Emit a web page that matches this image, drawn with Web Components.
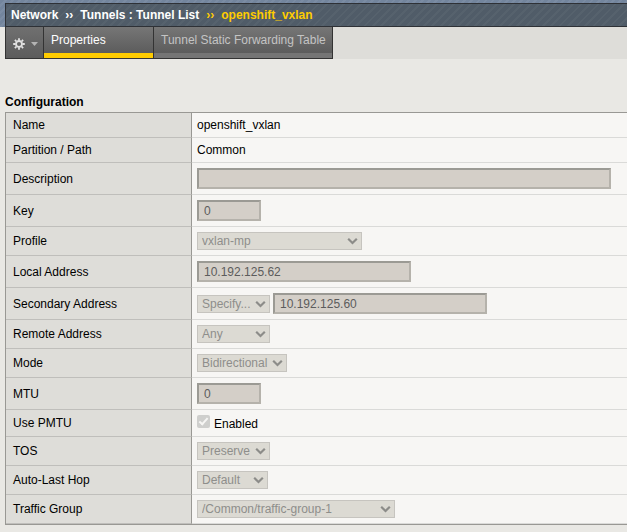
<!DOCTYPE html>
<html lang="en">
<head>
<meta charset="utf-8">
<title>Network : Tunnels : openshift_vxlan</title>
<style>
  body { margin: 0; background: #e9e8e4; color: #000; font: 12px/14px "Liberation Sans", Arial, sans-serif; }
</style>
</head>
<body>
<tunnel-page></tunnel-page>

<template id="page">
  <style>
    :host { display: block; }
    main { display: block; padding: 36px 0 8px 5px; }
    h2 { margin: 0 0 3px; font: bold 12px/14px "Liberation Sans", Arial, sans-serif; }
  </style>
  <crumb-bar>
    <span>Network</span>
    <span>Tunnels : Tunnel List</span>
    <span>openshift_vxlan</span>
  </crumb-bar>
  <tab-bar>
    <tab-item active>Properties</tab-item>
    <tab-item>Tunnel Static Forwarding Table</tab-item>
  </tab-bar>
  <main>
    <h2>Configuration</h2>
    <config-table></config-table>
  </main>
</template>

<template id="crumbs">
  <style>
    :host {
      display: block; padding: 3px 0 0 5px;
      background: repeating-linear-gradient(135deg, #73859d 0 3px, #7b8ca3 3px 5px);
    }
    nav {
      display: flex; gap: 7px; height: 22px; padding-left: 5px; line-height: 22px;
      font-weight: bold; color: #fff;
      border: solid #2e3136; border-width: 1px 0 1px 1px;
      background: repeating-linear-gradient(135deg, #505c68 0 4px, #56626d 4px 6px);
    }
    .last { color: #fc0; }
  </style>
  <nav aria-label="Breadcrumb"></nav>
</template>

<template id="tabs">
  <style>
    :host { display: flex; padding-left: 5px; background: linear-gradient(90deg, #e9e8e4 5px, #deddd9 5px); }
    div { display: flex; border: solid #333; border-width: 0 1px 1px; }
    button {
      display: flex; align-items: center; gap: 6px; width: 37px; padding: 2px 0 0 7px;
      border: 0; background: linear-gradient(#707070, #5c5c5c);
    }
    svg { display: block; }
  </style>
  <div>
    <button type="button" aria-label="Tab options">
      <svg width="12" height="12" viewBox="-6 -6 12 12">
        <g stroke="#e2e2e2" fill="none">
          <path stroke-width="1.8" d="M0-5.8V-3.6M0 5.8V3.6M-5.8 0H-3.6M5.8 0H3.6M-4.1-4.1L-2.7-2.7M4.1-4.1L2.7-2.7M-4.1 4.1L-2.7 2.7M4.1 4.1L2.7 2.7"/>
          <circle r="3" stroke-width="1.9"/>
        </g>
      </svg>
      <svg width="7" height="4" viewBox="0 0 7 4"><path d="M0 0H7L3.5 4Z" fill="#b4b4b4"/></svg>
    </button>
    <slot></slot>
  </div>
</template>

<template id="tab">
  <style>
    :host { display: block; border-left: 1px solid #333; }
    a {
      display: block; height: 26px; padding: 0 6px 0 7px; line-height: 26px;
      color: #c4c4c4; text-decoration: none; white-space: nowrap;
      border-bottom: 5px solid #757575; background: linear-gradient(#767676, #5c5c5c) padding-box;
    }
    :host([active]) a { min-width: 96px; color: #fff; border-bottom-color: #fc0; }
  </style>
  <a href="#"><slot></slot></a>
</template>

<template id="select-box">
  <style>
    :host { display: inline-grid; vertical-align: top; }
    ::slotted(select) {
      grid-area: 1 / 1; appearance: none; box-sizing: border-box; height: 18px; margin: 0; padding: 0 18px 0 4px;
      font: inherit; line-height: 16px; color: #8e8e8b; opacity: 1;
      background: #dcdad3; border: 1px solid #c6c4bf; border-radius: 0;
    }
    svg { grid-area: 1 / 1; place-self: center end; margin-right: 4px; pointer-events: none; }
  </style>
  <slot></slot>
  <svg width="11" height="8" viewBox="0 0 11 8"><path d="M1.2 1.8L5.5 6L9.8 1.8" fill="none" stroke="#8c8c89" stroke-width="2.2"/></svg>
</template>

<template id="config">
  <style>
    :host { display: block; }
    table { width: 100%; border-collapse: separate; border-spacing: 0; background: #f7f6f4; border: solid #999894; border-width: 1px 0 1px 1px; }
    th, td { padding: 5px; text-align: left; vertical-align: middle; font-weight: normal; border-bottom: 1px solid #dadad8; }
    th { box-sizing: border-box; width: 186px; padding-left: 7px; background: #deddd9; border-bottom-color: #bfbebb; border-right: 1px solid #999894; }
    td > div { display: flex; align-items: center; gap: 3px; }
    .plain { height: 14px; }
    input[type=text] {
      box-sizing: border-box; width: 64px; height: 21px; margin: 0; padding: 0 5px;
      font: inherit; color: #5c5c5c; background: #d4cfc8; border: 2px solid;
      border-color: #9b9a94 #b5b2ab #b5b2ab #9b9a94; border-radius: 0;
    }
    #description { width: 414px; }
    #local, #secondary { width: 214px; }
    .w165 { width: 165px; } .w73 { width: 73px; } .w90 { width: 90px; } .w71 { width: 71px; } .w198 { width: 198px; }
    .check { gap: 4px; height: 16px; }
    .check label { margin-top: 2px; }
    .check input {
      appearance: none; display: grid; width: 13px; height: 13px; margin: 0 0 3px;
      background: #cfcfcd; border-radius: 2px;
    }
    .check input:checked::before { content: ""; place-self: center; width: 3px; height: 7px; margin-bottom: 2px; border: solid #f7f6f4; border-width: 0 2px 2px 0; transform: rotate(42deg); }
  </style>
  <table>
    <tr><th scope="row">Name</th><td><div class="plain">openshift_vxlan</div></td></tr>
    <tr><th scope="row">Partition / Path</th><td><div class="plain">Common</div></td></tr>
    <tr><th scope="row"><label for="description">Description</label></th><td><div><input type="text" id="description" disabled></div></td></tr>
    <tr><th scope="row"><label for="key">Key</label></th><td><div><input type="text" id="key" value="0" disabled></div></td></tr>
    <tr><th scope="row"><label for="profile">Profile</label></th><td><div><select-box><select class="w165" id="profile" disabled><option>vxlan-mp</option></select></select-box></div></td></tr>
    <tr><th scope="row"><label for="local">Local Address</label></th><td><div><input type="text" id="local" value="10.192.125.62" disabled></div></td></tr>
    <tr><th scope="row"><label for="secondary">Secondary Address</label></th><td><div><select-box><select class="w73" aria-label="Secondary address type" disabled><option>Specify...</option></select></select-box><input type="text" id="secondary" value="10.192.125.60" disabled></div></td></tr>
    <tr><th scope="row"><label for="remote">Remote Address</label></th><td><div><select-box><select class="w73" id="remote" disabled><option>Any</option></select></select-box></div></td></tr>
    <tr><th scope="row"><label for="mode">Mode</label></th><td><div><select-box><select class="w90" id="mode" disabled><option>Bidirectional</option></select></select-box></div></td></tr>
    <tr><th scope="row"><label for="mtu">MTU</label></th><td><div><input type="text" id="mtu" value="0" disabled></div></td></tr>
    <tr><th scope="row">Use PMTU</th><td><div class="check"><input type="checkbox" id="pmtu" checked disabled><label for="pmtu">Enabled</label></div></td></tr>
    <tr><th scope="row"><label for="tos">TOS</label></th><td><div><select-box><select class="w73" id="tos" disabled><option>Preserve</option></select></select-box></div></td></tr>
    <tr><th scope="row"><label for="hop">Auto-Last Hop</label></th><td><div><select-box><select class="w71" id="hop" disabled><option>Default</option></select></select-box></div></td></tr>
    <tr><th scope="row"><label for="group">Traffic Group</label></th><td><div><select-box><select class="w198" id="group" disabled><option>/Common/traffic-group-1</option></select></select-box></div></td></tr>
  </table>
</template>

<script>
  class TemplateElement extends HTMLElement {
    constructor() {
      super();
      this.attachShadow({ mode: "open" })
        .append(document.getElementById(this.constructor.template).content.cloneNode(true));
    }
  }

  class CrumbBar extends TemplateElement {
    static template = "crumbs";
    connectedCallback() {
      const nav = this.shadowRoot.querySelector("nav");
      const crumbs = [...this.children];
      nav.replaceChildren();
      crumbs.forEach((crumb, i) => {
        const last = i === crumbs.length - 1;
        if (i) {
          const mark = document.createElement("span");
          mark.textContent = "››";
          if (last) mark.className = "last";
          nav.append(mark);
        }
        const slot = document.createElement("slot");
        slot.name = crumb.slot = "crumb-" + i;
        const box = document.createElement("span");
        if (last) box.className = "last";
        box.append(slot);
        nav.append(box);
      });
    }
  }
  class TabItem extends TemplateElement { static template = "tab"; }
  class TabBar extends TemplateElement { static template = "tabs"; }
  class SelectBox extends TemplateElement { static template = "select-box"; }
  class ConfigTable extends TemplateElement { static template = "config"; }
  class TunnelPage extends TemplateElement { static template = "page"; }

  customElements.define("crumb-bar", CrumbBar);
  customElements.define("tab-item", TabItem);
  customElements.define("tab-bar", TabBar);
  customElements.define("select-box", SelectBox);
  customElements.define("config-table", ConfigTable);
  customElements.define("tunnel-page", TunnelPage);
</script>
</body>
</html>
